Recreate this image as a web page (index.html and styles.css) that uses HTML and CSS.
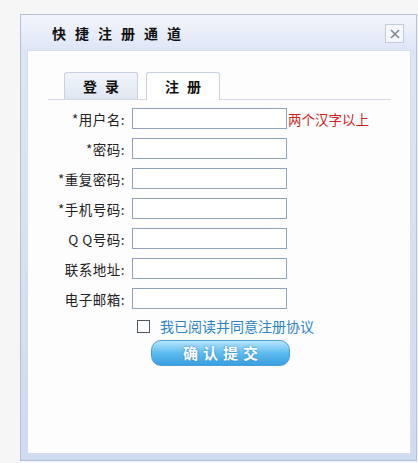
FILE: index.html
```html
<!DOCTYPE html>
<html lang="zh-CN">
<head>
    <meta charset="UTF-8">
    <title>快捷注册通道</title>
    <link rel="stylesheet" href="styles.css">
</head>
<body>
    <div class="dialog">
        <div class="dialog-title">
            <span class="title-text">快捷注册通道</span>
            <span class="close-btn">
                <svg width="10" height="10" viewBox="0 0 10 10"><path d="M1 1L9 9M9 1L1 9" stroke="#7d8694" stroke-width="1.6"/></svg>
            </span>
        </div>
        <div class="dialog-body">
            <div class="tabs">
                <div class="tab">登录</div>
                <div class="tab active">注册</div>
            </div>

            <!-- Register form -->
            <form class="reg-form">
                <div class="row"><label>*用户名:</label><input type="text"><span class="hint">两个汉字以上</span></div>
                <div class="row"><label>*密码:</label><input type="password"></div>
                <div class="row"><label>*重复密码:</label><input type="password"></div>
                <div class="row"><label>*手机号码:</label><input type="text"></div>
                <div class="row"><label>Q Q号码:</label><input type="text"></div>
                <div class="row"><label>联系地址:</label><input type="text"></div>
                <div class="row"><label>电子邮箱:</label><input type="text"></div>
                <div class="agree"><span class="check"></span>我已阅读并同意注册协议</div>
                <div class="submit-row"><button type="button">确认提交</button></div>
            </form>
        </div>
    </div>
</body>
</html>
```

FILE: styles.css
```css
body { margin: 0; background: #f6f6f6; font-family: "Noto Sans CJK SC", "DejaVu Sans", sans-serif; }
.dialog { margin: 14px 0 0 20px; width: 395px; height: 445px; border: 1px solid #b4c0d6; background: linear-gradient(#f3f5fb, #dde6f6 36px, #cfdbf1); display: flex; flex-direction: column; }
.dialog-title { height: 35px; display: flex; align-items: center; justify-content: space-between; padding: 0 12px 0 31px; }
.title-text { font-size: 14px; font-weight: bold; letter-spacing: 9px; color: #111; }
.close-btn { width: 17px; height: 17px; border: 1px solid #c3cad8; background: #f5f7fb; display: flex; align-items: center; justify-content: center; margin-top: 2px; }
.dialog-body { flex: 1; margin: 0 5px 6px 6px; background: #fdfdfe; border: 1px solid #d4ddec; }
.tabs { margin: 20px 19px 0 20px; padding-left: 16px; display: flex; gap: 8px; align-items: flex-end; border-bottom: 1px solid #d2d9e5; height: 28px; }
.tab { width: 72px; height: 26px; border: 1px solid #c8d1e1; border-bottom: none; border-radius: 3px 3px 0 0; background: linear-gradient(#f2f5fb, #dfe6f3); font-size: 14px; font-weight: bold; letter-spacing: 8px; text-indent: 8px; text-align: center; line-height: 26px; color: #111; }
.tab.active { background: #fff; height: 27px; margin-bottom: -1px; }
.reg-form { margin-top: 8px; display: flex; flex-direction: column; gap: 9px; }
.row { display: flex; align-items: center; height: 21px; }
.row label { width: 97px; text-align: right; font-size: 13.5px; letter-spacing: 0.5px; color: #222; margin-right: 7px; }
.row input { width: 155px; height: 21px; box-sizing: border-box; border: 1px solid #8fa3bd; background: #fff; padding: 0 3px; margin: 0; }
.hint { font-size: 13.5px; color: #d21f1f; margin-left: 1px; }
.agree { display: flex; align-items: center; margin: -1px 0 0 109px; font-size: 14px; color: #2a83c4; height: 18px; }
.check { width: 11px; height: 11px; border: 1px solid #4d5a66; background: #fff; margin-right: 10px; }
.submit-row { margin: -4px 0 0 123px; }
.submit-row button { width: 139px; height: 26px; border: 1px solid #4a9ed6; border-radius: 10px; background: linear-gradient(#b6e6fb, #5dbcf0 50%, #3a9fe0); color: #fff; font-family: "Noto Sans CJK SC", sans-serif; font-size: 15px; font-weight: bold; letter-spacing: 5px; text-indent: 5px; text-shadow: 0 0 2px #2a7fb8; padding: 0; line-height: 24px; }
```
